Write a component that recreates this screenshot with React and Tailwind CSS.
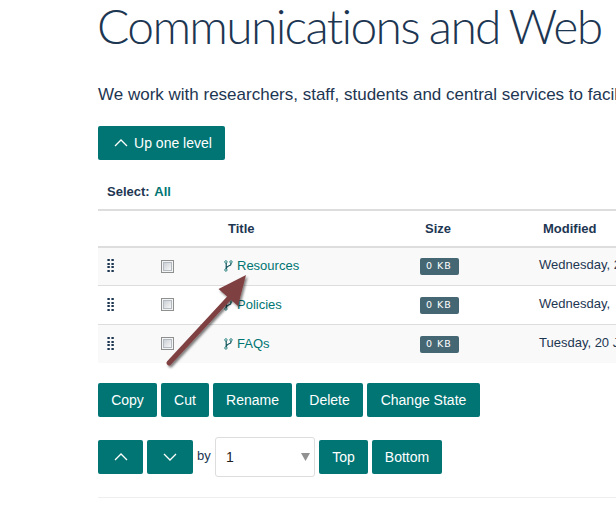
import React from "react";

const BTN =
  "flex h-[34px] shrink-0 items-center justify-center rounded-[2px] bg-[#007573] text-[14px] text-white whitespace-nowrap";

function Chevron({ down }) {
  return (
    <svg width="14" height="8" viewBox="0 0 14 8" fill="none" stroke="white" strokeWidth="1.3">
      <path d={down ? "M1 1l6 6 6-6" : "M1 7l6-6 6 6"} />
    </svg>
  );
}

function Grip() {
  return (
    <svg width="7" height="13" viewBox="0 0 7 13" fill="#1d3652">
      {[0, 4, 7, 11].map((y) => (
        <g key={y}>
          <rect x="0.4" y={y} width="2.4" height="2" />
          <rect x="4.4" y={y} width="2.4" height="2" />
        </g>
      ))}
    </svg>
  );
}

function Fork() {
  return (
    <svg width="9" height="12" viewBox="0 0 9 12" fill="none" stroke="#2d8582" strokeWidth="1">
      <circle cx="1.9" cy="1.9" r="1.2" />
      <circle cx="7" cy="1.9" r="1.2" />
      <circle cx="1.9" cy="10" r="1.2" />
      <path d="M2.200 3v6M7 3v1C7 6.500 2.700 5 2.400 8.500" stroke="#12555c" strokeWidth="1.2" />
    </svg>
  );
}

function Row({ name, date, className, checkClass = "pt-[11px]" }) {
  return (
    <div className={`flex ${className}`}>
      <div className="w-[63px] shrink-0 pt-[11px] pl-[9px]"><Grip /></div>
      <div className={`w-[63px] shrink-0 ${checkClass}`}>
        <div className="flex h-[13px] w-[13px] items-center justify-center border border-[#8e8f8f] bg-[#f4f4f4]">
          <div className="h-[9px] w-[9px] border border-[#b4bac2] bg-linear-to-br from-[#cbcfd5] to-[#f6f6f6]" />
        </div>
      </div>
      <div className="flex w-[196px] shrink-0 pt-[8px] text-[13px] leading-[20px] text-[#007573]">
        <span className="pt-[4px]"><Fork /></span>
        <span className="pl-[4px]">{name}</span>
      </div>
      <div className="w-[119px] shrink-0 pt-[10px]">
        <div className="flex h-[17px] w-[39px] items-center rounded-[2px] bg-[#456773] pl-[6px] font-['DejaVu_Sans',sans-serif] text-[9.500px] tracking-[1px] whitespace-pre text-white">
          0 KB
        </div>
      </div>
      <div className="pt-[7px] text-[13px] leading-[20px] whitespace-nowrap">{date}</div>
    </div>
  );
}

function Arrow() {
  return (
    <svg className="absolute top-[265px] left-[155px]" width="110" height="115" viewBox="155 265 110 115">
      <defs>
        <filter id="shade" x="-20%" y="-20%" width="150%" height="150%">
          <feDropShadow dx="1.5" dy="2" stdDeviation="1.3" floodColor="#000" floodOpacity="0.5" />
        </filter>
      </defs>
      <g filter="url(#shade)" fill="#7f4042">
        <path d="M169 363L232 295" stroke="#7f4042" strokeWidth="5" strokeLinecap="round" />
        <path d="M246 275L218.500 289L238 306Z" />
      </g>
    </svg>
  );
}

export default function App() {
  return (
    <div className="relative h-[511px] w-[616px] overflow-hidden bg-white pl-[98px] font-['Liberation_Sans',Arial,sans-serif] text-[#1d3652]">
      <h1 className="-ml-px h-[80px] pt-px font-['Lato',sans-serif] text-[48px] leading-[50px] font-light tracking-[-1.700px] [word-spacing:-1.500px] whitespace-nowrap">
        Communications and Web
      </h1>
      <p className="h-[46px] pt-[5px] text-[17px] leading-[20px] whitespace-nowrap">
        We work with researchers, staff, students and central services to facil
      </p>
      <button className={`${BTN} w-[127px] gap-[6px] pl-[3px]`}><Chevron />Up one level</button>
      <div className="h-[49px] pt-[22px] pl-[9px] text-[13px] leading-[20px] font-bold">
        Select: <span className="pl-px text-[#007573]">All</span>
      </div>
      <div className="flex h-[39px] border-y-2 border-[#dddddd] pt-[8px] text-[13px] leading-[20px] font-bold">
        <div className="w-[197px] pl-[130px]">Title</div>
        <div className="w-[248px] pl-[130px]">Size</div>
        <div>Modified</div>
      </div>
      <Row name="Resources" date="Wednesday, 2" checkClass="pt-[12px]" className="h-[38px] border-b border-[#dddddd] bg-[#f9f9f9]" />
      <Row name="Policies" date="Wednesday," className="h-[39px] border-b border-[#dddddd] pt-px" />
      <Row name="FAQs" date="Tuesday, 20 J" className="h-[38px] bg-[#f9f9f9] pt-px" />
      <div className="flex gap-[4px] pt-[20px]">
        <button className={`${BTN} w-[59px]`}>Copy</button>
        <button className={`${BTN} w-[48px]`}>Cut</button>
        <button className={`${BTN} w-[79px]`}>Rename</button>
        <button className={`${BTN} w-[67px]`}>Delete</button>
        <button className={`${BTN} w-[113px]`}>Change State</button>
      </div>
      <div className="flex h-[81px] items-center gap-[4px] border-b border-[#eeeeee]">
        <button className={`${BTN} w-[45px]`}><Chevron /></button>
        <button className={`${BTN} w-[46px]`}><Chevron down /></button>
        <span className="-mt-[2px] w-[14px] text-[13px]">by</span>
        <div className="flex h-[40px] w-[100px] items-center justify-between rounded-[3px] border border-[#dddddd] pr-[4px] pl-[10px] text-[14px]">
          <span className="text-[#222222]">1</span>
          <svg width="9" height="8" viewBox="0 0 9 8" fill="#919191"><path d="M0 0h9L4.500 8z" /></svg>
        </div>
        <button className={`${BTN} w-[49px]`}>Top</button>
        <button className={`${BTN} w-[70px]`}>Bottom</button>
      </div>
      <Arrow />
    </div>
  );
}
